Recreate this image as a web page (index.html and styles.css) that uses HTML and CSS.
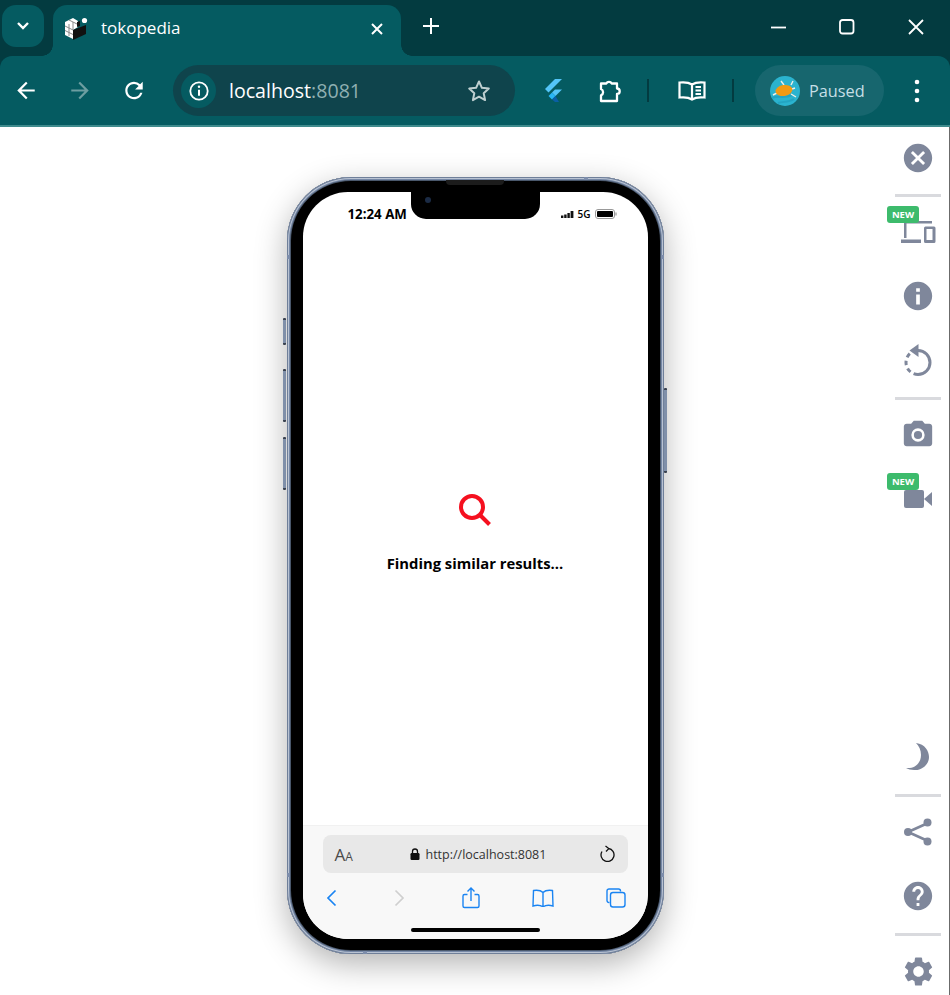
FILE: index.html
```html
<!DOCTYPE html>
<html lang="en">
<head>
    <meta charset="UTF-8">
    <title>tokopedia</title>
    <link rel="stylesheet" href="styles.css">
</head>
<body>
    <div class="tabstrip">
        <div class="tab-search">
            <svg width="14" height="10" viewBox="0 0 14 10"><path d="M2 2l5 5 5-5" fill="none" stroke="#fff" stroke-width="2.4"/></svg>
        </div>
        <div class="tab">
            <svg class="favicon" width="24" height="26" viewBox="0 0 24 26">
                <path d="M1 6l8-4 5 3v6l-5 3v9l-8-4z" fill="#fff"/>
                <path d="M9 14l13-5v9L9 24z" fill="#111"/>
                <path d="M13 6l3-1v5l-3 1z" fill="#111"/>
                <path d="M1 10l8 4M1 14.500l8 4M5 4l8 4M5 8v12M9 6v8" stroke="#8a8a8a" stroke-width="1" fill="none"/>
                <circle cx="20.500" cy="4.500" r="2.600" fill="#fff"/>
            </svg>
            <span class="tab-title">tokopedia</span>
            <svg class="tab-close" width="14" height="14" viewBox="0 0 14 14"><path d="M2 2l10 10M12 2L2 12" stroke="#fff" stroke-width="2"/></svg>
        </div>
        <svg class="new-tab" width="16" height="16" viewBox="0 0 16 16"><path d="M8 0v16M0 8h16" stroke="#fff" stroke-width="2"/></svg>
        <div class="window-controls">
            <svg width="16" height="16" viewBox="0 0 16 16"><path d="M1 8.500h15" stroke="#fff" stroke-width="1.800"/></svg>
            <svg width="16" height="16" viewBox="0 0 16 16"><rect x="1" y="1" width="13.500" height="13.500" rx="2.500" fill="none" stroke="#fff" stroke-width="1.800"/></svg>
            <svg width="16" height="16" viewBox="0 0 16 16"><path d="M1 1l14 14M15 1L1 15" stroke="#fff" stroke-width="1.800"/></svg>
        </div>
    </div>

    <div class="toolbar">
        <svg class="nav-btn" width="36" height="27" viewBox="-4.500 0 33 24" fill="#fff"><path d="M20 11H7.830l5.590-5.590L12 4l-8 8 8 8 1.410-1.410L7.830 13H20v-2z"/></svg>
        <svg class="nav-btn" width="36" height="27" viewBox="-4.500 0 33 24" fill="#6d9ea1"><path d="M4 11h12.170l-5.590-5.590L12 4l8 8-8 8-1.410-1.410L16.170 13H4v-2z"/></svg>
        <svg class="nav-btn" width="36" height="27" viewBox="-4.500 0 33 24" fill="#fff"><path d="M17.650 6.350A7.958 7.958 0 0 0 12 4c-4.420 0-7.990 3.580-7.990 8s3.570 8 7.990 8c3.730 0 6.840-2.550 7.730-6h-2.080A5.990 5.990 0 0 1 12 18c-3.310 0-6-2.690-6-6s2.690-6 6-6c1.660 0 3.140.690 4.220 1.780L13 11h7V4l-2.350 2.350z"/></svg>

        <div class="omnibox">
            <div class="site-info">
                <svg width="20" height="20" viewBox="0 0 20 20"><circle cx="10" cy="10" r="8.700" fill="none" stroke="#fff" stroke-width="1.800"/><path d="M10 8.800v6" stroke="#fff" stroke-width="2"/><circle cx="10" cy="5.800" r="1.200" fill="#fff"/></svg>
            </div>
            <span class="host">localhost</span><span class="port">:8081</span>
            <svg class="star" width="24" height="24" viewBox="0 0 24 24"><path d="M12 2.500l2.900 6.300 6.900.8-5.100 4.700 1.400 6.800-6.100-3.400-6.100 3.400 1.400-6.800-5.100-4.700 6.900-.8z" fill="none" stroke="#bfd0d1" stroke-width="2" stroke-linejoin="round"/></svg>
        </div>

        <svg class="flutter" width="18" height="23" viewBox="0 0 18 23">
            <path d="M11 0h7L4.500 13.500 1 10z" fill="#54c5f8"/>
            <path d="M11 10.500h7l-6.500 6.500-3.500-3.500z" fill="#54c5f8"/>
            <path d="M4.500 17l3.500-3.500 3.500 3.500L8 20.500z" fill="#29b6f6"/>
            <path d="M11.500 17l3.500 6h-4l-3-2.500z" fill="#0a5fa6"/>
        </svg>
        <svg class="puzzle" width="24" height="24" viewBox="0 0 24 24"><path d="M3 4.500h5.300a3 3 0 0 1 5.400 0H19V9.500a2.700 2.700 0 0 1 0 5.400V22H3v-5.600a3.500 3.500 0 0 0 0-6.400z" fill="none" stroke="#fff" stroke-width="2.300" stroke-linejoin="round"/></svg>
        <span class="toolbar-sep"></span>
        <svg class="reader" width="28" height="22" viewBox="0 0 28 22"><path d="M14 4.500C11 2.500 6 2 1.500 2.500v15c4.500-.5 9.500 0 12.500 2 3-2 8-2.500 12.500-2v-15C22 2 17 2.500 14 4.500zM14 4.500v15M17.500 7h5.500M17.500 10.500h5.500M17.500 14h5.500" fill="none" stroke="#fff" stroke-width="2.200"/></svg>
        <span class="toolbar-sep sep-last"></span>

        <div class="profile">
            <svg width="30" height="30" viewBox="0 0 30 30">
                <circle cx="15" cy="15" r="15" fill="#2bb3cf"/>
                <path d="M2 22c6-3 12 1 20-3M8 27c5-2 10 0 16-4" stroke="#23a4c2" stroke-width="2" fill="none"/>
                <path d="M11 5l3 4M23 5l-2 4M25 12l-3 1M3 19l4-2M21 18l5 3" stroke="#f2efe6" stroke-width="1.400"/>
                <ellipse cx="14" cy="14.500" rx="8.500" ry="5.500" fill="#f09a14" transform="rotate(-8 14 14.500)"/>
            </svg>
            <span class="profile-label">Paused</span>
        </div>
        <svg class="menu-dots" width="8" height="24" viewBox="0 0 8 24" fill="#fff"><circle cx="4" cy="3" r="2.300"/><circle cx="4" cy="12" r="2.300"/><circle cx="4" cy="21" r="2.300"/></svg>
    </div>

    <div class="viewport">
        <div class="phone">
            <span class="side-btn silence"></span>
            <span class="side-btn vol-up"></span>
            <span class="side-btn vol-down"></span>
            <span class="side-btn power"></span>
            <span class="band band-top"></span>
            <span class="band band-bottom"></span>
            <span class="band band-l1"></span>
            <span class="band band-r1"></span>
            <span class="band band-l2"></span>
            <span class="band band-r2"></span>
            <span class="speaker"></span>

            <div class="screen">
                <div class="notch"><span class="camera"></span></div>
                <div class="statusbar">
                    <span class="clock">12:24 AM</span>
                    <div class="status-icons">
                        <svg width="13" height="7" viewBox="0 0 13 7" fill="#111"><rect x="0" y="4.500" width="2.400" height="2.500"/><rect x="3.200" y="3.500" width="2.400" height="3.500"/><rect x="6.400" y="2" width="2.400" height="5"/><rect x="9.600" y="0" width="2.800" height="7"/></svg>
                        <span class="network">5G</span>
                        <svg width="22" height="10" viewBox="0 0 22 10"><rect x=".5" y=".5" width="19" height="9" rx="2.500" fill="#fff" stroke="#999"/><rect x="2" y="2" width="16" height="6" rx="1" fill="#000"/><path d="M21 3.500v3" stroke="#999" stroke-width="1.200"/></svg>
                    </div>
                </div>

                <div class="loading">
                    <svg width="34" height="34" viewBox="0 0 34 34"><circle cx="14" cy="14" r="11" fill="none" stroke="#f5101f" stroke-width="4"/><path d="M22 22l9.500 9.500" stroke="#f5101f" stroke-width="4"/></svg>
                    <p class="loading-text">Finding similar results...</p>
                </div>

                <div class="safari">
                    <div class="safari-address">
                        <span class="text-size">A<small>A</small></span>
                        <svg class="lock" width="10" height="12" viewBox="0 0 10 12"><path d="M2.500 5V3.500a2.500 2.500 0 0 1 5 0V5" fill="none" stroke="#111" stroke-width="1.300"/><rect x=".5" y="5" width="9" height="7" rx="1.200" fill="#111"/></svg>
                        <span class="safari-url">http://localhost:8081</span>
                        <svg class="safari-reload" width="16" height="18" viewBox="0 0 16 18"><path d="M9.500 3.500A6.500 6.500 0 1 1 3 6.500M6.500 1l3.300 2.600L7 6.500" fill="none" stroke="#111" stroke-width="1.300"/></svg>
                    </div>
                    <div class="safari-nav">
                        <svg width="11" height="18" viewBox="0 0 11 18"><path d="M9.500 1.500L2 9l7.500 7.500" fill="none" stroke="#1a84f2" stroke-width="1.700"/></svg>
                        <svg class="nav-forward" width="11" height="18" viewBox="0 0 11 18"><path d="M1.500 1.500L9 9l-7.500 7.500" fill="none" stroke="#cfcfcf" stroke-width="1.700"/></svg>
                        <svg class="nav-share" width="18" height="22" viewBox="0 0 18 22"><path d="M5.500 7.500H2.500a1.500 1.500 0 0 0-1.500 1.500v10a1.500 1.500 0 0 0 1.500 1.500h13a1.500 1.500 0 0 0 1.500-1.500V9a1.500 1.500 0 0 0-1.500-1.500h-3M9 14V1.500M5.500 4.500L9 1l3.500 3.500" fill="none" stroke="#1a84f2" stroke-width="1.400"/></svg>
                        <svg class="nav-book" width="22" height="18" viewBox="0 0 22 18"><path d="M11 3.500C9 1.500 5 1 1.500 1.500L1 17c3.500-1 7.500-.8 10 .8 2.500-1.600 6.500-1.800 10-.8l-.5-15.500C17 1 13 1.500 11 3.500zM11 3.500v14" fill="none" stroke="#1a84f2" stroke-width="1.400"/></svg>
                        <svg class="nav-tabs" width="20" height="20" viewBox="0 0 20 20"><path d="M3.500 14.500H3A2 2 0 0 1 1 12.500V3a2 2 0 0 1 2-2h9.500a2 2 0 0 1 2 2v.500" fill="none" stroke="#1a84f2" stroke-width="1.400"/><rect x="4.500" y="4.500" width="14.500" height="14.500" rx="2.500" fill="none" stroke="#1a84f2" stroke-width="1.400"/></svg>
                    </div>
                    <span class="home-bar"></span>
                </div>
            </div>
        </div>

        <aside class="sidebar">
            <div class="side-group">
                <div class="side-item first">
                    <svg width="34" height="34" viewBox="0 0 24 24" fill="#7f879b"><path d="M12 2C6.470 2 2 6.470 2 12s4.470 10 10 10 10-4.470 10-10S17.530 2 12 2zm5 13.590L15.590 17 12 13.410 8.410 17 7 15.590 10.590 12 7 8.410 8.410 7 12 10.590 15.590 7 17 8.410 13.410 12 17 15.590z"/></svg>
                </div>
                <span class="side-divider"></span>
                <div class="side-item">
                    <span class="badge-new">NEW</span>
                    <svg class="devices" width="36" height="24" viewBox="0 0 36 24" fill="#7f879b"><path d="M4 1h28v2.500H6.500V18H4zM1 19.500h20V23H1z"/><path d="M25.500 6.500h8.500a1.500 1.500 0 0 1 1.500 1.500v13.500a1.500 1.500 0 0 1-1.500 1.500h-8.500a1.500 1.500 0 0 1-1.500-1.500V8a1.500 1.500 0 0 1 1.500-1.500zM26.500 9v11h6V9z" fill-rule="evenodd"/></svg>
                </div>
                <div class="side-item">
                    <svg width="34" height="34" viewBox="0 0 24 24" fill="#7f879b"><path d="M12 2C6.480 2 2 6.480 2 12s4.480 10 10 10 10-4.480 10-10S17.520 2 12 2zm1.300 16h-2.600v-7h2.600v7zm0-9h-2.600V6.500h2.600V9z"/></svg>
                </div>
                <div class="side-item">
                    <svg width="30" height="32" viewBox="0 0 30 32"><path d="M15 6.500a12 12 0 1 1 0 24" fill="none" stroke="#7f879b" stroke-width="3"/><path d="M15 30.500a12 12 0 0 1-12-12 12 12 0 0 1 4-9" fill="none" stroke="#7f879b" stroke-width="3" stroke-dasharray="4.500 3.500"/><path d="M15.500 0v13L6.500 6.500z" fill="#7f879b"/></svg>
                </div>
                <span class="side-divider"></span>
                <div class="side-item">
                    <svg width="34" height="34" viewBox="0 0 24 24"><path d="M9 2L7.170 4H4c-1.100 0-2 .9-2 2v12c0 1.100.9 2 2 2h16c1.100 0 2-.9 2-2V6c0-1.100-.9-2-2-2h-3.170L15 2H9z" fill="#7f879b"/><circle cx="12" cy="12" r="3.800" fill="#7f879b" stroke="#fff" stroke-width="1.800"/></svg>
                </div>
                <div class="side-item">
                    <span class="badge-new">NEW</span>
                    <svg class="video" width="30" height="20" viewBox="0 0 30 20" fill="#7f879b"><rect x="1" y="1" width="20" height="18" rx="2"/><path d="M21 10l8-7v14z"/></svg>
                </div>
            </div>
            <div class="side-group side-bottom">
                <div class="side-item">
                    <svg width="24" height="29" viewBox="0 0 24 29" fill="#7f879b"><path d="M10 0c9 1 13 8 13 14 0 8-8 14-15 13-3 0-6-1-8-2 9 1 15-5 15-13 0-5-2-9-5-12z"/></svg>
                </div>
                <span class="side-divider"></span>
                <div class="side-item">
                    <svg width="30" height="30" viewBox="0 0 30 30" fill="#7f879b"><path d="M25 6L5 15l20 9" fill="none" stroke="#7f879b" stroke-width="2.600"/><circle cx="24.500" cy="5.500" r="4"/><circle cx="5" cy="15" r="4"/><circle cx="24.500" cy="24.500" r="4"/></svg>
                </div>
                <div class="side-item">
                    <svg width="34" height="34" viewBox="0 0 24 24" fill="#7f879b"><path d="M12 2C6.480 2 2 6.480 2 12s4.480 10 10 10 10-4.480 10-10S17.520 2 12 2zm1 17h-2v-2h2v2zm2.070-7.750l-.9.920C13.450 12.900 13 13.500 13 15h-2v-.5c0-1.100.450-2.100 1.170-2.830l1.240-1.260c.370-.360.590-.860.590-1.410 0-1.100-.9-2-2-2s-2 .9-2 2H8c0-2.210 1.790-4 4-4s4 1.790 4 4c0 .880-.360 1.680-.930 2.250z"/></svg>
                </div>
                <span class="side-divider"></span>
                <div class="side-item">
                    <svg width="35" height="35" viewBox="0 0 24 24" fill="#7f879b"><path d="M19.140 12.940c.040-.3.060-.610.060-.940 0-.320-.020-.640-.070-.940l2.030-1.580a.49.49 0 0 0 .120-.610l-1.920-3.320a.488.488 0 0 0-.590-.220l-2.390.960c-.5-.380-1.030-.7-1.620-.940l-.360-2.540a.484.484 0 0 0-.480-.410h-3.840c-.240 0-.430.170-.470.410l-.360 2.540c-.590.240-1.130.570-1.620.940l-2.390-.960c-.220-.080-.470 0-.590.220L2.740 8.870c-.120.210-.080.470.120.610l2.030 1.580c-.050.3-.090.630-.090.940s.020.640.070.940l-2.030 1.580a.49.49 0 0 0-.120.610l1.920 3.320c.120.220.370.290.590.220l2.390-.960c.5.380 1.030.7 1.620.940l.360 2.540c.050.240.240.410.480.410h3.840c.240 0 .440-.17.470-.41l.360-2.540c.590-.240 1.130-.560 1.620-.940l2.390.960c.220.080.470 0 .590-.22l1.920-3.320c.120-.220.070-.470-.120-.61l-2.010-1.580zM12 15.600c-1.980 0-3.600-1.620-3.600-3.600s1.620-3.600 3.600-3.600 3.600 1.620 3.600 3.600-1.620 3.600-3.600 3.600z"/></svg>
                </div>
            </div>
        </aside>
    </div>
</body>
</html>
```

FILE: styles.css
```css
html, body {
    margin: 0;
    height: 995px;
    overflow: hidden;
}
body {
    font-family: "Open Sans", "Noto Sans", sans-serif;
    background: #033b40;
    display: flex;
    flex-direction: column;
}

/* tab strip */
.tabstrip {
    height: 56px;
    display: flex;
    flex-shrink: 0;
}
.tab-search {
    width: 42px;
    height: 42px;
    margin: 5px 0 0 2px;
    border-radius: 14px;
    background: #055b61;
    display: flex;
    align-items: center;
    justify-content: center;
}
.tab {
    position: relative;
    width: 348px;
    height: 51px;
    margin: 5px 0 0 9px;
    background: #055b61;
    border-radius: 14px 14px 0 0;
    display: flex;
    align-items: center;
    padding: 0 17px 0 11px;
    box-sizing: border-box;
    color: #fff;
}
.tab::before, .tab::after {
    content: "";
    position: absolute;
    bottom: 0;
    width: 11px;
    height: 11px;
}
.tab::before {
    left: -11px;
    background: radial-gradient(circle at 0 0, transparent 10.500px, #055b61 11px);
}
.tab::after {
    right: -11px;
    background: radial-gradient(circle at 100% 0, transparent 10.500px, #055b61 11px);
}
.favicon {
    margin-bottom: 4px;
}
.tab-title {
    margin-left: 13px;
    font-size: 17px;
    flex: 1;
    margin-top: -7px;
}
.tab-close {
    margin-bottom: 4px;
}
.new-tab {
    margin: 18px 0 0 22px;
}
.window-controls {
    margin-left: auto;
    padding: 19px 26px 0 0;
    display: flex;
    gap: 53px;
    height: 16px;
}

/* toolbar */
.toolbar {
    height: 69px;
    flex-shrink: 0;
    background: #055b61;
    border-bottom: 2px solid #3f8b8d;
    border-radius: 12px 12px 0 0;
    display: flex;
    align-items: center;
    padding-left: 8px;
    color: #fff;
}
.nav-btn {
    margin-right: 18px;
}
.nav-btn:nth-child(3) {
    margin-right: 21px;
}
.omnibox {
    width: 342px;
    height: 51px;
    border-radius: 26px;
    background: #0f444c;
    display: flex;
    align-items: center;
    padding: 0 24px 0 8px;
    box-sizing: border-box;
    flex-shrink: 0;
}
.site-info {
    width: 35px;
    height: 35px;
    border-radius: 50%;
    background: #055b61;
    display: flex;
    align-items: center;
    justify-content: center;
    margin-right: 13px;
}
.host {
    font-size: 19.600px;
}
.port {
    font-size: 19.600px;
    color: #8fb0b2;
}
.star {
    margin-left: auto;
}
.flutter {
    margin-left: 29px;
}
.puzzle {
    margin-left: 36px;
}
.toolbar-sep {
    width: 2px;
    height: 23px;
    background: #033b40;
    margin-left: 25px;
}
.sep-last {
    margin-left: 26px;
}
.reader {
    margin-left: 29px;
}
.profile {
    width: 129px;
    height: 51px;
    margin-left: 21px;
    border-radius: 26px;
    background: #17666e;
    display: flex;
    align-items: center;
    padding-left: 15px;
    box-sizing: border-box;
    flex-shrink: 0;
}
.profile-label {
    margin-left: 9px;
    font-size: 16.300px;
    color: #c6dfe6;
}
.menu-dots {
    margin-left: 29px;
}

/* page area */
.viewport {
    flex: 1;
    position: relative;
    background: #fff;
    border-right: 1px solid #6b6b6b;
    display: flex;
    justify-content: center;
    padding-top: 50px;
}

/* phone */
.phone {
    position: relative;
    width: 377px;
    height: 777px;
    box-sizing: border-box;
    padding: 15px 16px;
    background: #000;
    border-radius: 64px;
    margin-left: 1px;
    box-shadow: inset 0 0 0 1px #6f7f99, inset 0 0 0 2px #b9c3d3, inset 0 0 0 3px #7688a6, inset 0 0 0 4px #4a586c, 0 10px 32px rgba(0, 0, 0, .3);
}
.side-btn {
    position: absolute;
    width: 3px;
    background: #7f8fa9;
    border-radius: 1px;
    border: solid #39414f;
    border-width: 2px 0;
}
.silence { left: -4px; top: 141px; height: 23px; }
.vol-up { left: -4px; top: 192px; height: 49px; }
.vol-down { left: -4px; top: 260px; height: 49px; }
.power { right: -3px; top: 211px; height: 81px; }
.band {
    position: absolute;
    background: #7d8dab;
}
.band-top { left: 297px; top: 0; width: 4px; height: 3px; }
.band-bottom { left: 76px; bottom: 0; width: 4px; height: 3px; }
.band-l1 { left: 0; top: 78px; width: 3px; height: 4px; }
.band-r1 { right: 0; top: 78px; width: 3px; height: 4px; }
.band-l2 { left: 0; top: 696px; width: 3px; height: 4px; }
.band-r2 { right: 0; top: 696px; width: 3px; height: 4px; }
.speaker {
    position: absolute;
    left: 159px;
    top: 3px;
    width: 58px;
    height: 5px;
    border-radius: 0 0 4px 4px;
    background: #1c1c1c;
}
.screen {
    position: relative;
    height: 747px;
    background: #fff;
    border-radius: 45px;
    overflow: hidden;
    display: flex;
    flex-direction: column;
}
.notch {
    position: absolute;
    left: 108px;
    top: 0;
    width: 129px;
    height: 27px;
    background: #000;
    border-radius: 0 0 15px 15px;
}
.camera {
    position: absolute;
    left: 14px;
    top: 5px;
    width: 6px;
    height: 6px;
    border-radius: 50%;
    background: #1b2b45;
}
.statusbar {
    height: 44px;
    flex-shrink: 0;
    box-sizing: border-box;
    padding: 12px 31px 0 45px;
    display: flex;
    justify-content: space-between;
    align-items: flex-start;
}
.clock {
    font-size: 13.300px;
    font-weight: 700;
    line-height: 20px;
    color: #000;
}
.status-icons {
    display: flex;
    align-items: center;
    height: 20px;
    gap: 4px;
}
.network {
    font-size: 10px;
    font-weight: 600;
    color: #000;
}
.loading {
    flex: 1;
    display: flex;
    flex-direction: column;
    align-items: center;
    justify-content: center;
    padding-top: 5px;
}
.loading-text {
    margin: 26px 0 0;
    font-size: 14.800px;
    font-weight: 700;
    color: #000;
}

/* safari bar */
.safari {
    position: relative;
    height: 114px;
    flex-shrink: 0;
    box-sizing: border-box;
    background: #f8f8f8;
    border-top: 1px solid #f1f1f1;
    padding: 9px 20px 0;
}
.safari-address {
    height: 38px;
    border-radius: 8px;
    background: #e8e8e8;
    display: flex;
    align-items: center;
    padding: 0 13px 0 12px;
}
.text-size {
    font-size: 17px;
    color: #4a4a4a;
    width: 75px;
}
.text-size small {
    font-size: 12px;
}
.safari-url {
    margin-left: 6px;
    font-size: 12.500px;
    color: #333;
    flex: 1;
}
.safari-nav {
    display: flex;
    align-items: center;
    height: 22px;
    margin: 14px 0 0 3.500px;
}
.nav-forward { margin-left: 57px; }
.nav-share { margin-left: 56.500px; }
.nav-book { margin-left: 52.500px; }
.nav-tabs { margin-left: 52px; }
.home-bar {
    position: absolute;
    left: 108px;
    bottom: 7px;
    width: 129px;
    height: 4px;
    border-radius: 2px;
    background: #000;
}

/* side panel */
.sidebar {
    position: absolute;
    top: 0;
    right: 8px;
    bottom: -8px;
    width: 46px;
    display: flex;
    flex-direction: column;
}
.side-bottom {
    margin-top: auto;
}
.side-item {
    position: relative;
    height: 64px;
    display: flex;
    align-items: center;
    justify-content: center;
}
.side-item.first {
    height: 62px;
}
.side-divider {
    display: block;
    height: 3px;
    margin: 5px 0 3px;
    background: #d9dade;
}
.badge-new {
    position: absolute;
    left: -8px;
    top: 6px;
    width: 32px;
    height: 17px;
    border-radius: 3px;
    background: #3dbb6c;
    color: #fff;
    font-size: 9.500px;
    font-weight: 700;
    line-height: 17px;
    text-align: center;
}
```
